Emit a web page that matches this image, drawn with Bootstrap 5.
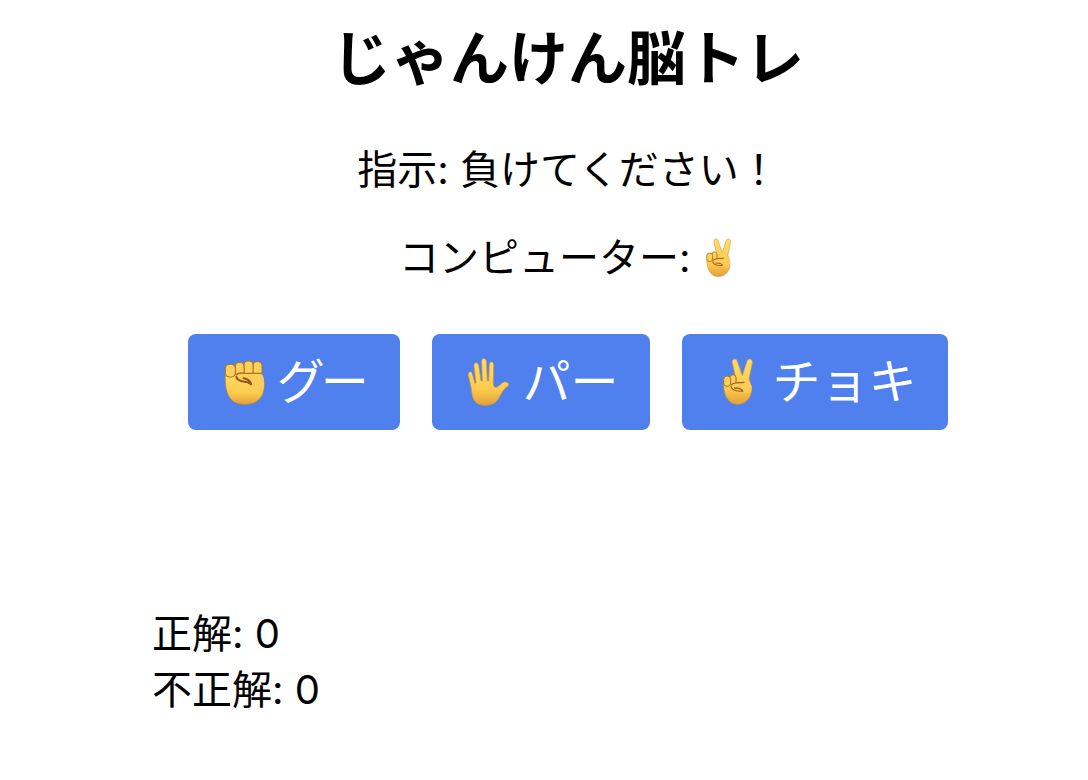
<!DOCTYPE html>
<html lang="ja">
<head>
<meta charset="utf-8">
<meta name="viewport" content="width=device-width, initial-scale=1">
<title>じゃんけん脳トレ</title>
<link href="https://cdn.jsdelivr.net/npm/bootstrap@5.3.0/dist/css/bootstrap.min.css" rel="stylesheet">
<style>
  body { font-family: Inter, "Noto Sans CJK JP", sans-serif; font-size: 40px; line-height: 56px; color: #000; background: #fff; font-feature-settings: "calt" 0; }
  .game { max-width: 832px; }
  .game-title { font-size: 59px; line-height: 70px; font-weight: 700; margin-bottom: 48px; }
  .prompt { margin-bottom: 32px; }
  .hands { gap: 32px; margin-top: 48px; }
  .btn-hand { --bs-btn-color: #fff; --bs-btn-bg: #4f80ee; --bs-btn-hover-color: #fff; --bs-btn-hover-bg: #3f6fdc; --bs-btn-active-color: #fff; --bs-btn-active-bg: #3562cc;
    --bs-btn-font-size: 48px; --bs-btn-line-height: 64px; --bs-btn-padding-x: 32px; --bs-btn-padding-y: 16px; --bs-btn-border-width: 0; --bs-btn-border-radius: 8px; }
  .btn-rock { font-feature-settings: "palt"; }
  .hand-icon { width: 42px; height: 48px; margin: 0 12px 0 4px; }
  .hand-inline { width: 35px; height: 40px; }
  .verdict { min-height: 80px; margin: 48px 0; }
</style>
</head>
<body>
<svg width="0" height="0" class="position-absolute" aria-hidden="true">
  <defs>
    <linearGradient id="skin" x1="0" y1="0" x2="0" y2="1">
      <stop offset="0" stop-color="#ffdc69"/><stop offset=".65" stop-color="#fccb4d"/><stop offset="1" stop-color="#e3a03a"/>
    </linearGradient>
    <symbol id="rock" viewBox="36 24 126 144">
      <path d="M41 66C38 91 41 120 50 137C60 157 77 163 99 163C127 163 144 151 152 131C157 119 160 96 151 82L148 65Z" fill="url(#skin)" stroke="#c98b2b" stroke-width="2"/>
      <g fill="#fdd05a" stroke="#a9702a" stroke-width="3">
        <rect x="123" y="35" width="27" height="42" rx="11"/>
        <rect x="96" y="33" width="27" height="43" rx="11"/>
        <rect x="70" y="37" width="26" height="42" rx="11"/>
        <rect x="40" y="43" width="30" height="38" rx="12"/>
      </g>
      <path d="M74 76C78 67 87 67 101 70L141 69C153 71 157 83 156 98C155 118 143 130 127 130C110 130 116 112 119 103C109 96 99 96 88 93C77 91 71 84 74 76Z" fill="#fdce57"/>
      <path d="M73 80C74 91 84 94 98 95C110 96 116 101 118 105C116 94 108 87 95 85" fill="none" stroke="#8f551f" stroke-width="6" stroke-linecap="round"/>
      <path d="M73 75C78 67 87 68 100 70H150" fill="none" stroke="#b07028" stroke-width="4"/>
    </symbol>
    <symbol id="paper" viewBox="36 24 126 144">
      <path d="M48 130C46 111 41 93 37 77C34 65 47 61 49 72L57 101L60 98L54 49C52 37 65 34 68 46L75 93H79L77 34C77 23 90 23 91 34L94 93H98L100 43C101 32 114 34 113 46L112 99C112 106 114 112 119 112C127 113 136 98 145 96C153 94 162 102 156 108C144 115 137 128 130 142C122 159 107 167 86 166C63 166 51 155 48 130Z" fill="url(#skin)" stroke="#cf9638" stroke-width="2" stroke-linejoin="round"/>
    </symbol>
    <symbol id="scissors" viewBox="36 24 126 144">
      <path d="M53 101C53 135 67 163 94 163C123 162 138 140 137 112L129 86L139 39C141 26 126 22 122 36L109 77L94 34C90 22 76 27 79 39L91 91Z" fill="url(#skin)" stroke="#cf9638" stroke-width="2" stroke-linejoin="round"/>
      <rect x="72" y="74" width="18" height="32" rx="9" fill="#fdd05a" stroke="#a9702a" stroke-width="3"/>
      <rect x="53" y="78" width="21" height="31" rx="10" fill="#fdd05a" stroke="#a9702a" stroke-width="3"/>
      <path d="M75 110C77 99 89 98 102 98L125 96C137 98 139 113 135 124C128 132 114 130 111 122C96 124 79 122 75 110Z" fill="#fdce57"/>
      <path d="M75 110C79 123 95 124 110 123C108 115 97 114 86 114M77 104C83 97 96 99 114 97" fill="none" stroke="#a06024" stroke-width="4" stroke-linecap="round"/>
    </symbol>
  </defs>
</svg>
<div class="ps-5 pt-4">
  <main class="game mx-auto text-center">
    <h1 class="game-title">じゃんけん脳トレ</h1>
    <p class="prompt">指示: 負けてください！</p>
    <p class="prompt d-flex justify-content-center align-items-center">コンピューター:&nbsp;<svg class="hand-inline" role="img" aria-label="チョキ"><use href="#scissors"/></svg></p>
    <div class="hands d-flex justify-content-center">
      <button type="button" class="btn btn-hand btn-rock d-flex align-items-center"><svg class="hand-icon" aria-hidden="true"><use href="#rock"/></svg>グー</button>
      <button type="button" class="btn btn-hand d-flex align-items-center"><svg class="hand-icon" aria-hidden="true"><use href="#paper"/></svg>パー</button>
      <button type="button" class="btn btn-hand d-flex align-items-center"><svg class="hand-icon" aria-hidden="true"><use href="#scissors"/></svg>チョキ</button>
    </div>
    <div class="verdict" aria-live="polite"></div>
    <div class="text-start">
      <div>正解: 0</div>
      <div>不正解: 0</div>
    </div>
  </main>
</div>
</body>
</html>
